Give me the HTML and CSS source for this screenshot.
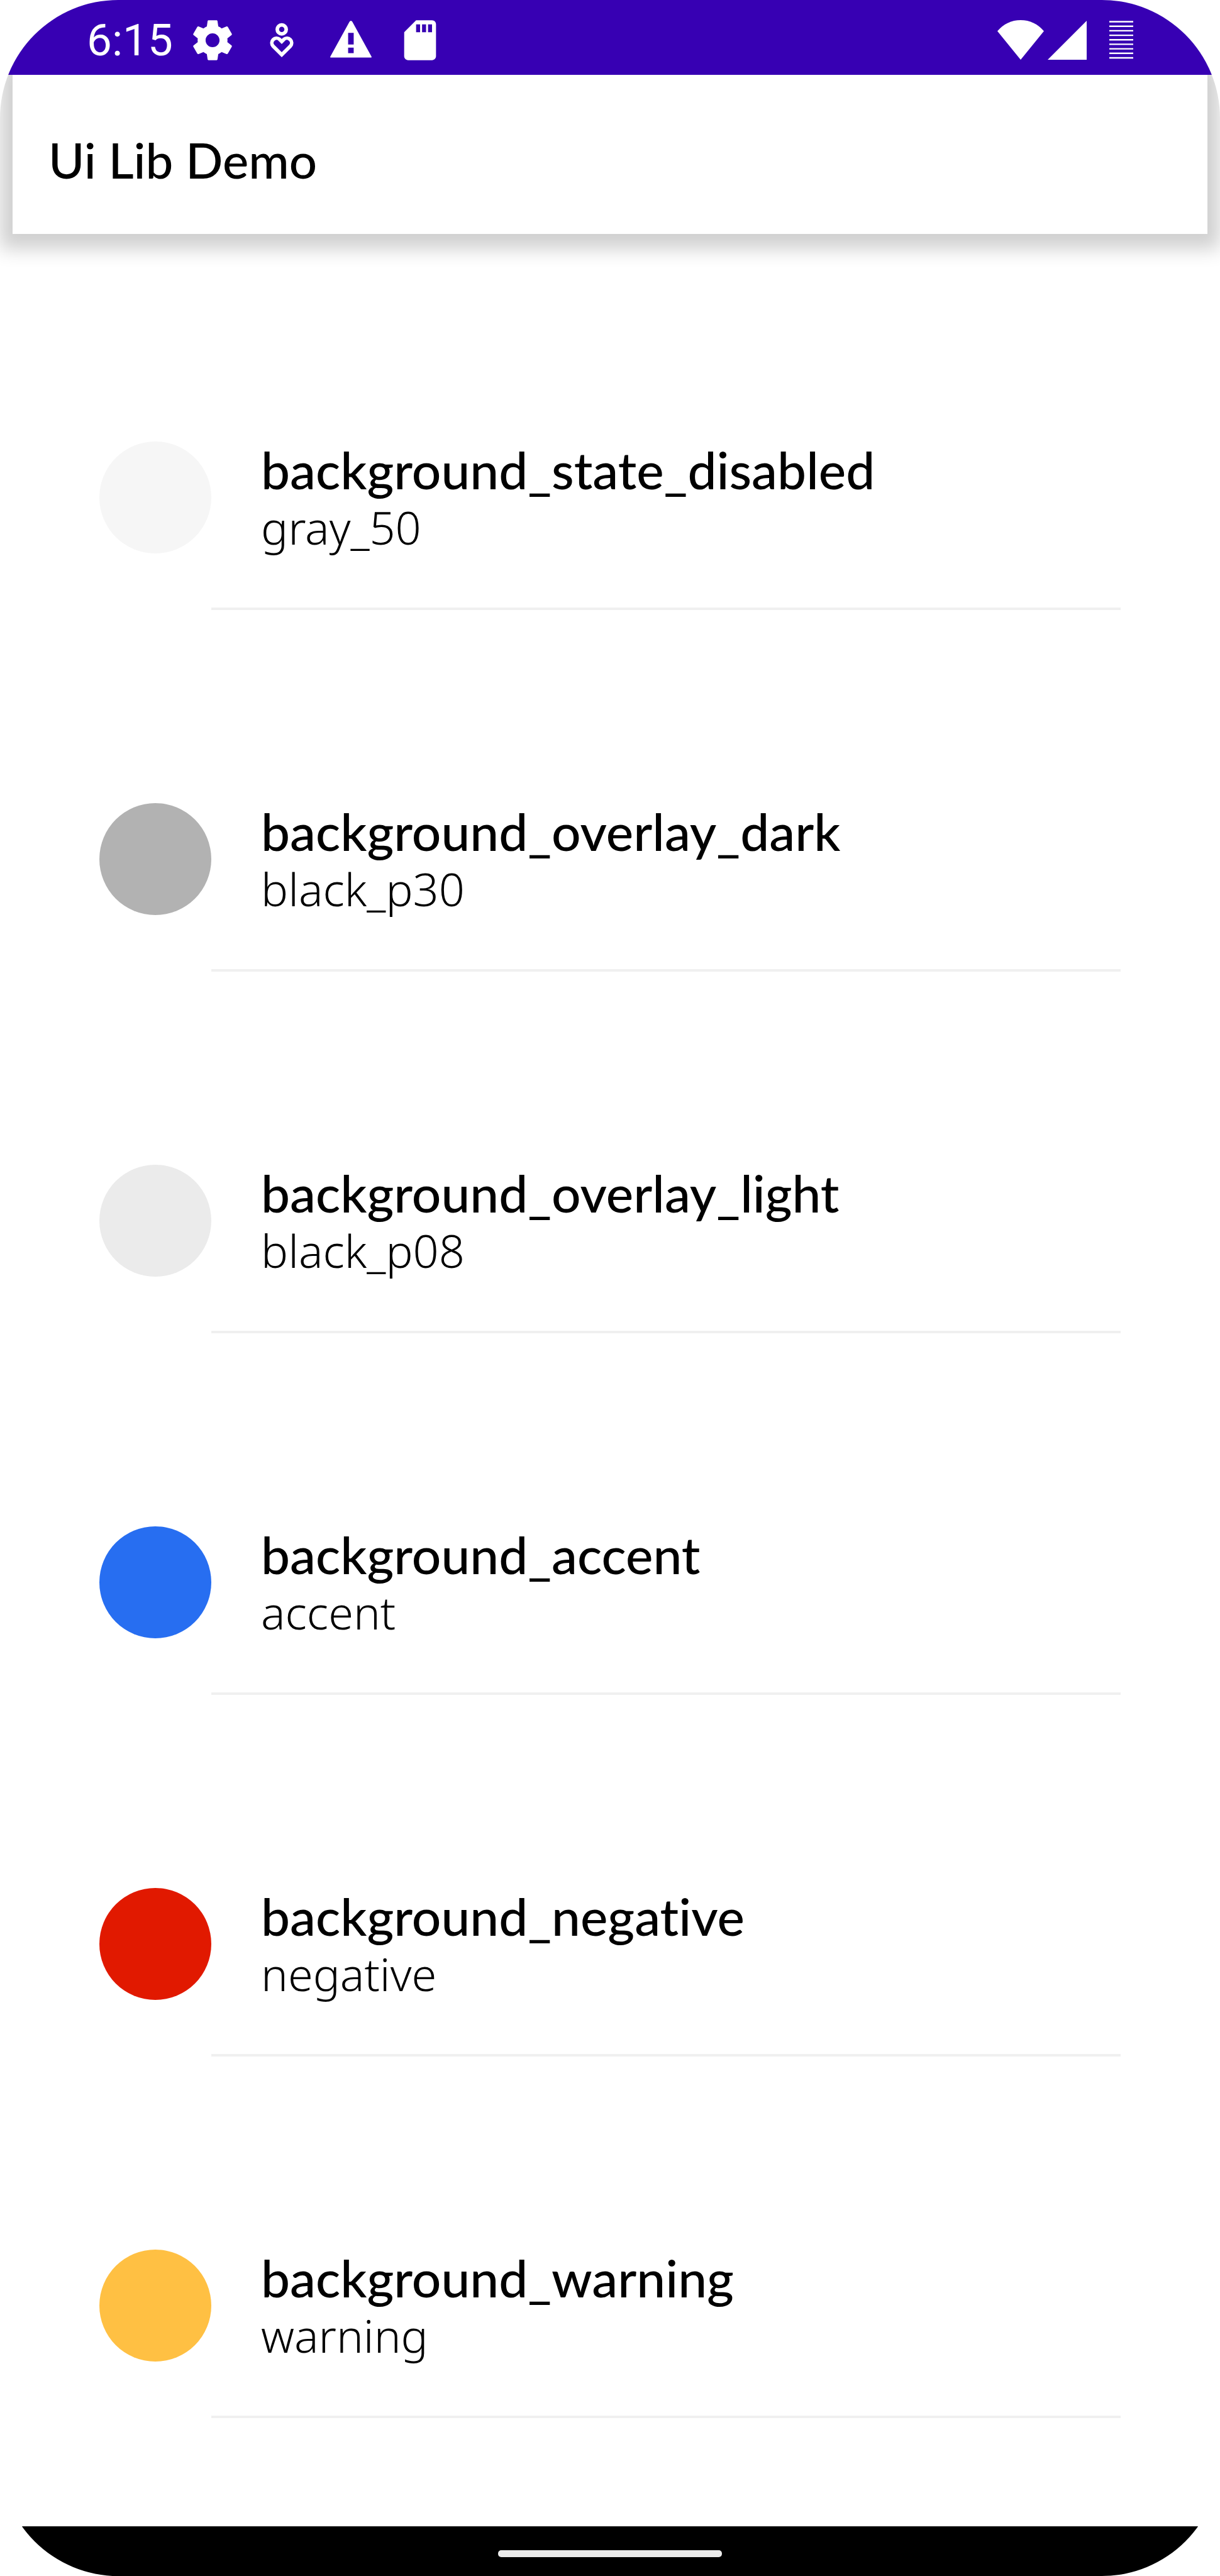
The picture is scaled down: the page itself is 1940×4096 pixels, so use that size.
FILE: index.html
```html
<!DOCTYPE html>
<html lang="en">
<head>
<meta charset="utf-8">
<title>Ui Lib Demo</title>
<link rel="stylesheet" href="styles.css">
</head>
<body>
<div class="screen">
  <div class="status-bar">
    <time class="clock">6:15</time>
    <div class="notifications">
      <svg class="icon" viewBox="0 0 24 24" aria-hidden="true"><path d="M19.43 12.98c.04-.32.07-.64.07-.98s-.03-.66-.07-.98l2.11-1.65c.19-.15.24-.42.12-.64l-2-3.46c-.12-.22-.39-.3-.61-.22l-2.49 1c-.52-.4-1.08-.73-1.69-.98l-.38-2.65C14.46 2.18 14.25 2 14 2h-4c-.25 0-.46.18-.49.42l-.38 2.65c-.61.25-1.17.59-1.69.98l-2.49-1c-.23-.09-.49 0-.61.22l-2 3.46c-.13.22-.07.49.12.64l2.11 1.65c-.04.32-.07.65-.07.98s.03.66.07.98l-2.11 1.65c-.19.15-.24.42-.12.64l2 3.46c.12.22.39.3.61.22l2.49-1c.52.4 1.08.73 1.69.98l.38 2.65c.03.24.24.42.49.42h4c.25 0 .46-.18.49-.42l.38-2.65c.61-.25 1.17-.59 1.69-.98l2.49 1c.23.09.49 0 .61-.22l2-3.46c.12-.22.07-.49-.12-.64l-2.11-1.65zM12 15.5c-1.93 0-3.5-1.57-3.5-3.5s1.57-3.5 3.5-3.5 3.5 1.57 3.5 3.5-1.57 3.5-3.5 3.5z"/></svg>
      <svg class="icon icon-outline" viewBox="0 0 24 24" aria-hidden="true"><circle cx="12" cy="6.55" r="2.25"/><path d="M12 19.27L7.64 14.91A2.35 2.35 0 0 1 10.96 11.59L12 12.63L13.04 11.59A2.35 2.35 0 0 1 16.36 14.91Z"/></svg>
      <svg class="icon" viewBox="0 0 24 24" aria-hidden="true"><path d="M1.7 20.100Q1.400 20.700 2.100 20.700H21.900Q22.600 20.700 22.300 20.100L12.700 2.700Q12 1.700 11.300 2.700ZM13.400 18.500h-2.800v-2.800h2.800ZM13.400 14.100h-2.800V8.300h2.800Z"/></svg>
      <svg class="icon" viewBox="0 0 24 24" aria-hidden="true"><path d="M18 2h-8L4.020 8 4 20c0 1.100.9 2 2 2h12c1.100 0 2-.9 2-2V4c0-1.100-.9-2-2-2zm-6 6h-2V4h2v4zm3 0h-2V4h2v4zm3 0h-2V4h2v4z"/></svg>
    </div>
    <div class="indicators">
      <svg class="wifi" viewBox="0 0 74 63" aria-hidden="true"><path d="M0 17.500Q15 0 37 0T74 17.500L37 63Z"/></svg>
      <svg class="signal" viewBox="0 0 62 62" aria-hidden="true"><path d="M62 0V62H0Z"/></svg>
      <svg class="battery" viewBox="0 0 38 62" aria-hidden="true"><path d="M0 1.500H38M0 8.700H38M0 15.900H38M0 23.100H38M0 30.300H38M0 37.400H38M0 44.600H38M0 51.800H38M0 59H38"/></svg>
    </div>
  </div>
  <header class="toolbar"><h1 class="toolbar-title">Ui Lib Demo</h1></header>
  <main class="content">
    <ul class="color-list">
      <li class="color-row"><span class="swatch gray-50"></span><div class="details"><h2 class="name">background_state_disabled</h2><p class="value">gray_50</p></div></li>
      <li class="color-row"><span class="swatch black-p30"></span><div class="details"><h2 class="name">background_overlay_dark</h2><p class="value">black_p30</p></div></li>
      <li class="color-row"><span class="swatch black-p08"></span><div class="details"><h2 class="name">background_overlay_light</h2><p class="value">black_p08</p></div></li>
      <li class="color-row"><span class="swatch accent"></span><div class="details"><h2 class="name">background_accent</h2><p class="value">accent</p></div></li>
      <li class="color-row"><span class="swatch negative"></span><div class="details"><h2 class="name">background_negative</h2><p class="value">negative</p></div></li>
      <li class="color-row"><span class="swatch warning"></span><div class="details"><h2 class="name">background_warning</h2><p class="value">warning</p></div></li>
    </ul>
  </main>
  <div class="nav-bar"><span class="nav-handle"></span></div>
</div>
</body>
</html>
```
FILE: styles.css
```css
* {
  box-sizing: border-box;
}

body {
  margin: 0;
  background: #fff;
}

h1, h2, p, ul {
  margin: 0;
  padding: 0;
}

.screen {
  display: flex;
  flex-direction: column;
  min-height: 100vh;
  overflow: hidden;
  border-radius: 188px;
  background: #fff;
  color: #000;
}

/* System status bar */
.status-bar {
  position: relative;
  z-index: 2;
  display: flex;
  align-items: center;
  height: 119px;
  padding: 8px 138px 0;
  background: #3700b3;
  color: #fff;
}

.clock {
  font: 400 71px/80px Roboto, sans-serif;
}

.notifications {
  display: flex;
  gap: 34px;
  margin-left: 25px;
}

.icon {
  width: 76px;
  height: 76px;
  fill: #fff;
}

.icon-outline {
  fill: none;
  stroke: #fff;
  stroke-width: 1.8;
}

.indicators {
  display: flex;
  align-items: center;
  margin-left: auto;
}

.wifi {
  width: 74px;
  height: 63px;
  margin-right: 6px;
  fill: #fff;
}

.signal {
  width: 62px;
  height: 62px;
  margin-right: 36px;
  fill: #fff;
}

.battery {
  width: 38px;
  height: 62px;
  fill: none;
  stroke: #fff;
  stroke-width: 2.4;
}

/* App toolbar */
.toolbar {
  position: relative;
  z-index: 1;
  display: flex;
  align-items: center;
  height: 253px;
  margin: 0 20px;
  padding: 16px 57px 0;
  background: #fff;
  box-shadow: 0 4px 28px 20px rgba(0, 0, 0, 0.19);
}

.toolbar-title {
  font: 500 78px/92px Lato, sans-serif;
}

/* Colour list */
.content {
  padding: 23px 158px 0;
}

.color-list {
  list-style: none;
}

.color-row {
  display: flex;
  padding-top: 307px;
}

.swatch {
  flex: none;
  width: 178px;
  height: 178px;
  border-radius: 50%;
}

.details {
  flex: 1;
  height: 268px;
  padding-left: 79px;
  border-bottom: 4px solid #f0f0f0;
}

.name {
  font: 500 82px/88px Lato, sans-serif;
  font-variant-ligatures: none;
}

.value {
  font: 350 72px/96px "Noto Sans", sans-serif;
}

.gray-50 { background: #f6f6f6; }
.black-p30 { background: #b2b2b2; }
.black-p08 { background: #ebebeb; }
.accent { background: #276ef1; }
.negative { background: #e11900; }
.warning { background: #ffc043; }

/* Gesture navigation bar */
.nav-bar {
  display: flex;
  justify-content: center;
  height: 79px;
  margin-top: auto;
  padding-top: 38px;
  background: #000;
}

.nav-handle {
  width: 356px;
  height: 11px;
  border-radius: 5px;
  background: #ebebeb;
}
```
